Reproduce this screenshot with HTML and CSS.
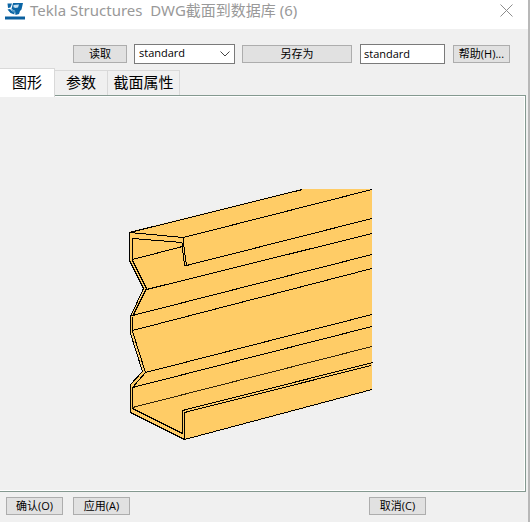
FILE: index.html
```html
<!DOCTYPE html>
<html lang="zh-CN">
<head>
<meta charset="utf-8">
<title>Tekla Structures DWG截面到数据库 (6)</title>
<link rel="stylesheet" href="styles.css">
</head>
<body>
<div class="window">
  <header class="titlebar">
    <svg class="logo" viewBox="0 0 20 17" aria-hidden="true">
      <path fill="#0a5f9e" d="M0 13.500h20v3H0z"/>
      <path fill="#0a65a5" d="M2.500.5H7L5.500 4.500 3 5zM8 0h10l-1.500 6.500L15 8l-1 3-3.500 1-.5-4-3.500-2zM2.500 6.500L5 6l2 2 2 1 .5 2.500-4-1.500z"/>
      <path fill="#c5dff0" d="M8.500 2l5.500-.5-1 3-2.500.5-2-.8z"/>
      <path fill="#4b96c6" d="M6 6l4 2 .5 3L8 9z"/>
    </svg>
    <h1 class="title">Tekla Structures&nbsp; DWG截面到数据库 (6)</h1>
    <button class="close" type="button" aria-label="关闭">
      <svg viewBox="0 0 13 13" aria-hidden="true"><path d="M.5.5l12 12M12.500.5l-12 12" fill="none" stroke="#8c8c8c"/></svg>
    </button>
  </header>

  <div class="toolbar">
    <button class="btn load" type="button">读取</button>
    <div class="combo">
      <select class="field" aria-label="读取设置"><option>standard</option></select>
      <svg class="chevron" viewBox="0 0 10 6" aria-hidden="true"><path d="M.5.5L5 5 9.500.5" fill="none" stroke="#444"/></svg>
    </div>
    <button class="btn save" type="button">另存为</button>
    <input class="field name" type="text" value="standard" aria-label="另存为名称">
    <button class="btn" type="button">帮助(H)...</button>
  </div>

  <nav class="tabs" role="tablist">
    <button class="tab active" type="button" role="tab" aria-selected="true">图形</button>
    <button class="tab" type="button" role="tab" aria-selected="false">参数</button>
    <button class="tab wide" type="button" role="tab" aria-selected="false">截面属性</button>
  </nav>

  <main class="panel" role="tabpanel">
    <svg class="profile" viewBox="120 180 260 270" role="img" aria-label="截面">
      <path fill="#ffcc66" d="M129 232L302 189H372V390L184 440 131 413V384L143 371 131 333V316L144 289 129 260z"/>
      <g class="edges">
        <path d="M129.500 232.500L302.500 189.500M129.500 232.500L183.500 237.500L372 189.500"/>
        <path d="M129.500 232.500V260.500L143.500 288.500L130.500 316.500V333.500L142.500 371.500L130.500 384.500V412.500L184.500 439.500L372 389.500"/>
        <path d="M182.500 242.500L132.500 238.500V260.500L146.500 288.500L132.500 316.500M132.500 316.500V331.500L145.500 372.500L132.500 387.500V408.500L182.500 433.500V410.500L373 362.500"/>
        <path d="M183.500 237.500V243.500L186.500 265.500H184.500L182.500 248.500V242.500"/>
        <path d="M184.500 439.500V412.500L371 365.500"/>
        <path d="M132.500 259.500L182.500 246.500M186.500 265.500L372 218.500M146.500 289.500L372 233.500M132.500 315.500L372 254.500M132.500 330.500L372 268.500M145.500 372.500L372 314.500M132.500 387.500L372 326.500"/>
        <path class="thin" d="M132.500 407.500L372 346.500"/>
      </g>
    </svg>
  </main>

  <footer class="actions">
    <button class="btn" type="button">确认(O)</button>
    <button class="btn" type="button">应用(A)</button>
    <button class="btn cancel" type="button">取消(C)</button>
  </footer>
</div>
</body>
</html>
```
FILE: styles.css
```css
* {
  box-sizing: border-box;
}

body {
  margin: 0;
  background: #f0f0f0;
  color: #000;
  font: 11px/16px "Open Sans", "Noto Sans CJK SC", sans-serif;
}

button,
input,
select {
  margin: 0;
  color: inherit;
  font: inherit;
}

.window {
  display: flex;
  flex-direction: column;
  min-height: 100vh;
  border-right: 2px solid #b8b8b8;
}

.titlebar {
  display: flex;
  align-items: flex-start;
  height: 29px;
  padding-left: 5px;
  background: #fff;
}

.logo {
  width: 20px;
  height: 17px;
  margin-top: 3px;
}

.title {
  flex: 1;
  margin: 0 0 0 5px;
  color: #999;
  font-family: "Noto Sans", "Noto Sans CJK SC", sans-serif;
  font-size: 15px;
  font-weight: 400;
  line-height: 20px;
  white-space: nowrap;
}

.close {
  width: 43px;
  height: 20px;
  padding: 0 15px;
  border: 0;
  background: none;
}

.close svg {
  display: block;
  width: 13px;
  height: 13px;
}

.toolbar {
  display: flex;
  align-items: center;
  gap: 7px;
  height: 39px;
  padding: 12px 18px 1px 73px;
}

.btn {
  width: 57px;
  height: 18px;
  padding: 0;
  border: 1px solid #adadad;
  background: #e1e1e1;
  line-height: 16px;
  white-space: nowrap;
}

.load {
  width: 54px;
}

.combo {
  position: relative;
  width: 101px;
}

.field {
  display: block;
  width: 100%;
  height: 20px;
  padding: 0 3px 2px;
  border: 1px solid #7a7a7a;
  border-radius: 0;
  background: #fff;
  appearance: none;
}

.combo .field {
  padding: 0 4px 2px;
}

.chevron {
  position: absolute;
  top: 7px;
  right: 5px;
  width: 10px;
  height: 6px;
  pointer-events: none;
}

.save {
  flex: 1;
}

.name {
  width: 85px;
  margin: 0 1px;
}

.tabs {
  display: flex;
  align-items: flex-end;
  height: 27px;
}

.tab {
  width: 53px;
  height: 25px;
  padding: 0 0 2px;
  border: 1px solid #d9d9d9;
  border-width: 1px 1px 0 0;
  background: #f0f0f0;
  font-size: 15px;
  line-height: 22px;
}

.tab.active {
  position: relative;
  width: 55px;
  height: 29px;
  margin-bottom: -2px;
  padding-bottom: 3px;
  background: #fff;
}

.tab.wide {
  width: 72px;
}

.panel {
  flex: 1;
  margin-right: 2px;
  padding: 84px 0 0 120px;
  border: 1px solid #849990;
  border-left: 0;
  box-shadow: inset -1px 1px #fff, inset 0 -1px #fff;
}

.profile {
  display: block;
  width: 260px;
  height: 270px;
}

.edges {
  fill: none;
  stroke: #000;
  shape-rendering: crispEdges;
}

.thin {
  stroke: #33250a;
}

.actions {
  display: flex;
  gap: 10px;
  padding: 5px 102px 7px 6px;
}

.cancel {
  margin-left: auto;
}
```
